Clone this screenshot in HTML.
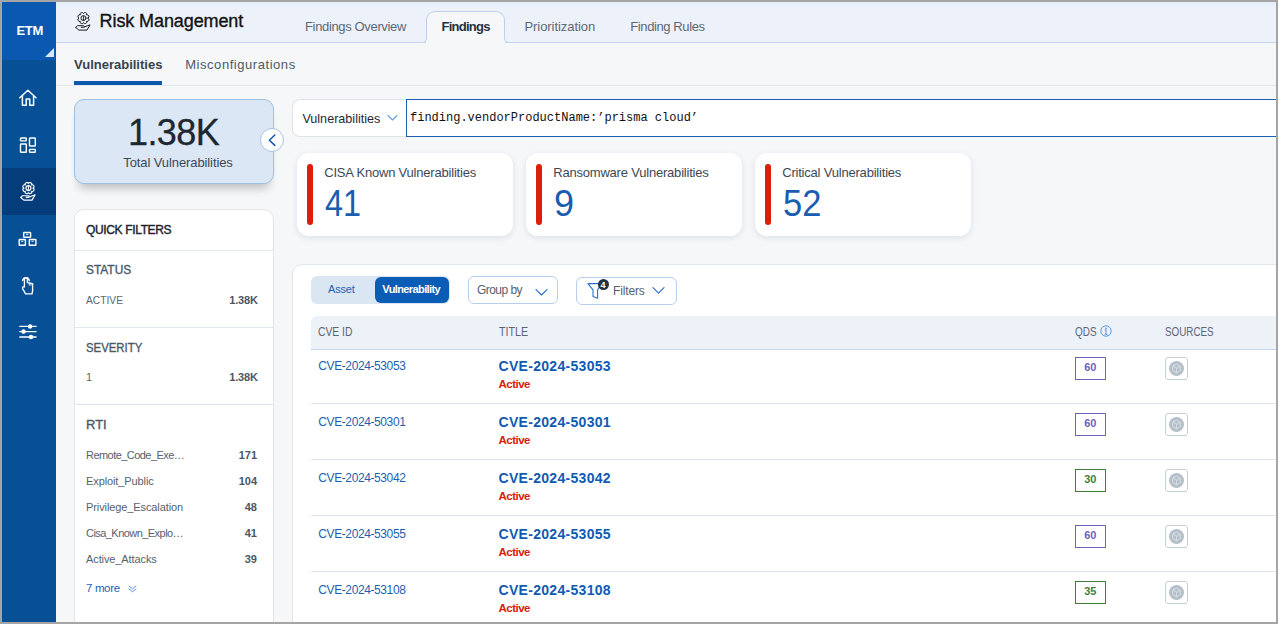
<!DOCTYPE html>
<html><head><meta charset="utf-8">
<style>
*{box-sizing:border-box;margin:0;padding:0}
html,body{width:1278px;height:624px;overflow:hidden;background:#f5f7f9}
body{font-family:"Liberation Sans",sans-serif;position:relative}
.b{position:absolute}
.t{position:absolute;line-height:1;white-space:nowrap}
</style></head><body>
<div class="b" style="left:0px;top:0px;width:1278px;height:624px;background:#a5a5a5"></div>
<div class="b" style="left:2px;top:2px;width:1274px;height:620px;background:#f5f7f9"></div>
<div class="b" style="left:2px;top:2px;width:54px;height:620px;background:#075096"></div>
<div class="b" style="left:2px;top:2px;width:54px;height:58px;background:#0a58b0"></div>
<div class="t " style="left:16.5px;top:24.00px;font-size:13px;color:#fff;font-weight:bold;letter-spacing:-0.3px;">ETM</div>
<div class="b" style="left:45px;top:48px;width:0;height:0;border-style:solid;border-width:0 0 9px 9px;border-color:transparent transparent #dde6f0 transparent"></div>
<div class="b" style="left:2px;top:168px;width:54px;height:47px;background:#053d7b"></div>
<svg class="b" style="left:18px;top:88px" width="20" height="20" viewBox="0 0 20 20" fill="none" stroke="#fff" stroke-width="1.5" stroke-linejoin="round" stroke-linecap="round"><path d="M1.8 9.7 L9.9 2.2 L18 9.7 M4.4 7.6 V17.2 H8.2 V11.1 H11.7 V17.2 H15.6 V7.6"/></svg>
<svg class="b" style="left:18px;top:135px" width="20" height="20" viewBox="0 0 20 20" fill="none" stroke="#fff" stroke-width="1.4"><rect x="2.5" y="3" width="5.8" height="2.9" rx="0.6"/><rect x="2.5" y="9" width="5.8" height="8.3" rx="0.6"/><rect x="11.5" y="3" width="5.8" height="8" rx="0.6"/><rect x="11.5" y="14.4" width="5.8" height="2.9" rx="0.6"/></svg>
<svg class="b" style="left:19.5px;top:182px" width="16" height="19" viewBox="0 0 16 19" fill="none" stroke="#fff" stroke-width="1.15" stroke-linejoin="round" stroke-linecap="round"><path d="M12.95 6.10 A1.72 1.72 0 0 1 11.63 9.28 A1.72 1.72 0 0 1 8.45 10.60 A1.72 1.72 0 0 1 5.27 9.28 A1.72 1.72 0 0 1 3.95 6.10 A1.72 1.72 0 0 1 5.27 2.92 A1.72 1.72 0 0 1 8.45 1.60 A1.72 1.72 0 0 1 11.63 2.92 A1.72 1.72 0 0 1 12.95 6.10Z"/><circle cx="8.45" cy="6.1" r="2.5"/><path d="M8.45 4.6 V6.4"/><circle cx="8.45" cy="7.7" r="0.3" fill="#fff"/><path d="M0.7 15.5 L3.9 18.1 H12 L15.1 12.8 L9.3 15 M0.7 15.5 L2.6 13.7 H8.5 C9.6 13.7 9.6 15.3 8.5 15.3 H6.2"/></svg>
<svg class="b" style="left:18px;top:228px" width="20" height="20" viewBox="0 0 20 20" fill="none" stroke="#fff" stroke-width="1.4"><rect x="5.7" y="4.5" width="6.9" height="4.7" rx="0.5"/><rect x="1.2" y="11.5" width="6.2" height="5.8" rx="0.5"/><rect x="11.3" y="11.5" width="6.6" height="5.8" rx="0.5"/><path d="M8 6.3h2.3M3.3 13.3h2M13.5 13.3h2" stroke-width="1"/></svg>
<svg class="b" style="left:18px;top:275px" width="20" height="20" viewBox="0 0 20 20" fill="none" stroke="#fff" stroke-width="1.35" stroke-linejoin="round" stroke-linecap="round"><path d="M6.4 11.5 V4.3 a1.5 1.5 0 0 1 3 0 V7.6 L14.6 8.6 V16 L14 18.9 H7.6 L4.6 13.6 C4.1 12.6 5 11.3 6.4 12"/><path d="M4.6 5.6 A3.4 3.4 0 0 1 11.3 5.6"/><path d="M11.3 8 V10.3 M13 8.3 V10.3" stroke-width="0.9"/></svg>
<svg class="b" style="left:18px;top:321px" width="20" height="20" viewBox="0 0 20 20" fill="#fff" stroke="#fff" stroke-width="1.3"><path d="M1.8 5.4h16.3M1.8 10.6h16.3M1.8 16h16.3" fill="none" stroke-linecap="round"/><circle cx="12.1" cy="5.4" r="1.6"/><circle cx="5.6" cy="10.6" r="1.6"/><circle cx="13" cy="16" r="1.6"/></svg>
<div class="b" style="left:56px;top:2px;width:1220px;height:41px;background:linear-gradient(#e4edf8,#edf2fa 6px,#edf2fa)"></div>
<div class="b" style="left:56px;top:42px;width:1220px;height:1px;background:#c3d5ec"></div>
<svg class="b" style="left:75px;top:12px" width="16" height="19" viewBox="0 0 16 19" fill="none" stroke="#1c1c1c" stroke-width="1.0" stroke-linejoin="round" stroke-linecap="round"><path d="M12.95 6.10 A1.72 1.72 0 0 1 11.63 9.28 A1.72 1.72 0 0 1 8.45 10.60 A1.72 1.72 0 0 1 5.27 9.28 A1.72 1.72 0 0 1 3.95 6.10 A1.72 1.72 0 0 1 5.27 2.92 A1.72 1.72 0 0 1 8.45 1.60 A1.72 1.72 0 0 1 11.63 2.92 A1.72 1.72 0 0 1 12.95 6.10Z"/><circle cx="8.45" cy="6.1" r="2.5"/><path d="M8.45 4.6 V6.4"/><circle cx="8.45" cy="7.7" r="0.3" fill="#1c1c1c"/><path d="M0.7 15.5 L3.9 18.1 H12 L15.1 12.8 L9.3 15 M0.7 15.5 L2.6 13.7 H8.5 C9.6 13.7 9.6 15.3 8.5 15.3 H6.2"/></svg>
<div class="t " style="left:99.6px;top:12.06px;font-size:18px;color:#131313;font-weight:normal;letter-spacing:-0.1px;-webkit-text-stroke:0.35px #131313;">Risk Management</div>
<div class="t " style="left:305px;top:20.00px;font-size:13px;color:#5d6875;font-weight:normal;letter-spacing:-0.35px;">Findings Overview</div>
<div class="b" style="left:426px;top:11px;width:79px;height:27px;background:#f5f7f9;border:1px solid #bcd0ea;border-bottom:none;border-radius:9px 9px 0 0"></div>
<div class="b" style="left:426px;top:38px;width:79px;height:5px;background:#f5f7f9"></div>
<div class="b" style="left:416px;top:36px;width:11px;height:7px;background:#edf2fa;border-right:1px solid #bcd0ea;border-bottom:1px solid #c3d5ec;border-bottom-right-radius:5px"></div>
<div class="b" style="left:504px;top:36px;width:11px;height:7px;background:#edf2fa;border-left:1px solid #bcd0ea;border-bottom:1px solid #c3d5ec;border-bottom-left-radius:5px"></div>
<div class="t " style="left:441.5px;top:20.00px;font-size:13px;color:#243242;font-weight:bold;letter-spacing:-0.75px;">Findings</div>
<div class="t " style="left:524.4px;top:20.00px;font-size:13px;color:#5d6875;font-weight:normal;letter-spacing:-0.05px;">Prioritization</div>
<div class="t " style="left:630.3px;top:20.00px;font-size:13px;color:#5d6875;font-weight:normal;letter-spacing:-0.4px;">Finding Rules</div>
<div class="t " style="left:74px;top:58.00px;font-size:13px;color:#37424e;font-weight:bold;letter-spacing:0px;">Vulnerabilities</div>
<div class="b" style="left:74px;top:81px;width:88px;height:4px;background:#0b57b0"></div>
<div class="t " style="left:185.2px;top:57.80px;font-size:13px;color:#4e5a67;font-weight:normal;letter-spacing:0.55px;">Misconfigurations</div>
<div class="b" style="left:56px;top:85px;width:1220px;height:1px;background:#e2e7ec"></div>
<div class="b" style="left:74px;top:99px;width:200px;height:85px;background:#dbe7f5;border:1px solid #9fbfe3;border-radius:10px;box-shadow:0 9px 10px -5px rgba(0,0,0,0.24)"></div>
<div class="t " style="left:128px;top:114.53px;font-size:36px;color:#1d2731;font-weight:normal;letter-spacing:-0.6px;-webkit-text-stroke:0.3px #1d2731;">1.38K</div>
<div class="t " style="left:123.3px;top:155.90px;font-size:13px;color:#3b4755;font-weight:normal;letter-spacing:-0.1px;">Total Vulnerabilities</div>
<div class="b" style="left:260px;top:128px;width:24px;height:24px;background:#fff;border:1px solid #a7c3e5;border-radius:50%"></div>
<svg class="b" style="left:266px;top:132px" width="12" height="16" viewBox="0 0 12 16" fill="none" stroke="#0b57b0" stroke-width="1.5" stroke-linecap="round" stroke-linejoin="round"><path d="M8.8 3 L3.4 8.2 L8.8 13.4"/></svg>
<div class="b" style="left:74px;top:209px;width:200px;height:440px;background:#fff;border:1px solid #e1e6eb;border-radius:10px"></div>
<div class="t " style="left:86px;top:224.24px;font-size:12px;color:#1b232c;font-weight:normal;letter-spacing:-0.35px;-webkit-text-stroke:0.4px #1b232c;">QUICK FILTERS</div>
<div class="b" style="left:75px;top:250px;width:198px;height:1px;background:#e3e8ec"></div>
<div class="t " style="left:86px;top:263.40px;font-size:13px;color:#4b5867;font-weight:normal;letter-spacing:0px;transform:scaleX(0.915);transform-origin:0 0;-webkit-text-stroke:0.35px #4b5867;">STATUS</div>
<div class="t " style="left:86px;top:295.29px;font-size:11px;color:#5b6672;font-weight:normal;letter-spacing:0px;transform:scaleX(0.93);transform-origin:0 0;">ACTIVE</div>
<div class="t" style="right:1020.3px;top:295.29px;font-size:11px;color:#4b5766;font-weight:bold;letter-spacing:-0.2px;">1.38K</div>
<div class="b" style="left:75px;top:327px;width:198px;height:1px;background:#e3e8ec"></div>
<div class="t " style="left:86px;top:341.00px;font-size:13px;color:#4b5867;font-weight:normal;letter-spacing:0px;transform:scaleX(0.875);transform-origin:0 0;-webkit-text-stroke:0.35px #4b5867;">SEVERITY</div>
<div class="t " style="left:86px;top:371.69px;font-size:11px;color:#5b6672;font-weight:normal;letter-spacing:0px;">1</div>
<div class="t" style="right:1020.3px;top:371.69px;font-size:11px;color:#4b5766;font-weight:bold;letter-spacing:-0.2px;">1.38K</div>
<div class="b" style="left:75px;top:404px;width:198px;height:1px;background:#e3e8ec"></div>
<div class="t " style="left:86px;top:418.40px;font-size:13px;color:#4b5867;font-weight:normal;letter-spacing:0px;-webkit-text-stroke:0.35px #4b5867;">RTI</div>
<div class="t " style="left:86px;top:449.79px;font-size:11px;color:#56616d;font-weight:normal;letter-spacing:-0.55px;">Remote_Code_Exe…</div>
<div class="t" style="right:1021px;top:449.79px;font-size:11px;color:#4b5766;font-weight:bold;letter-spacing:0px;">171</div>
<div class="t " style="left:86px;top:475.79px;font-size:11px;color:#56616d;font-weight:normal;letter-spacing:-0.1px;">Exploit_Public</div>
<div class="t" style="right:1021px;top:475.79px;font-size:11px;color:#4b5766;font-weight:bold;letter-spacing:0px;">104</div>
<div class="t " style="left:86px;top:501.79px;font-size:11px;color:#56616d;font-weight:normal;letter-spacing:-0.1px;">Privilege_Escalation</div>
<div class="t" style="right:1021px;top:501.79px;font-size:11px;color:#4b5766;font-weight:bold;letter-spacing:0px;">48</div>
<div class="t " style="left:86px;top:527.79px;font-size:11px;color:#56616d;font-weight:normal;letter-spacing:-0.55px;">Cisa_Known_Explo…</div>
<div class="t" style="right:1021px;top:527.79px;font-size:11px;color:#4b5766;font-weight:bold;letter-spacing:0px;">41</div>
<div class="t " style="left:86px;top:553.79px;font-size:11px;color:#56616d;font-weight:normal;letter-spacing:-0.1px;">Active_Attacks</div>
<div class="t" style="right:1021px;top:553.79px;font-size:11px;color:#4b5766;font-weight:bold;letter-spacing:0px;">39</div>
<div class="t " style="left:86px;top:583.07px;font-size:11.5px;color:#1a62b8;font-weight:normal;letter-spacing:-0.35px;">7 more</div>
<svg class="b" style="left:128px;top:585px" width="9" height="8" viewBox="0 0 9 8" fill="none" stroke="#5b8fd0" stroke-width="1" stroke-linecap="round" stroke-linejoin="round"><path d="M1 1 L4.5 3.8 L8 1 M1 4 L4.5 6.8 L8 4"/></svg>
<div class="b" style="left:292px;top:99px;width:115px;height:38px;background:#fff;border:1px solid #dfe4e9;border-right:none;border-radius:8px 0 0 8px"></div>
<div class="t " style="left:302.4px;top:112.63px;font-size:12.6px;color:#1e2935;font-weight:normal;letter-spacing:0px;">Vulnerabilities</div>
<svg class="b" style="left:387px;top:114px" width="11" height="8" viewBox="0 0 11 8" fill="none" stroke="#6b9fd6" stroke-width="1.1" stroke-linecap="round" stroke-linejoin="round"><path d="M1 1.5 L5.5 6 L10 1.5"/></svg>
<div class="b" style="left:406px;top:99px;width:874px;height:38px;background:#fff;border:1.5px solid #1b60b2"></div>
<div class="t " style="left:410px;top:111.80px;font-size:12px;color:#111;font-weight:normal;letter-spacing:0px;font-family:'Liberation Mono',monospace;">finding.vendorProductName:&#8217;prisma cloud&#8217;</div>
<div class="b" style="left:297px;top:153px;width:216px;height:83px;background:#fff;border-radius:12px;box-shadow:0 2px 6px rgba(20,40,70,0.10)"></div>
<div class="b" style="left:307px;top:164px;width:6px;height:61px;background:#dc1f0a;border-radius:3px"></div>
<div class="t " style="left:324.2px;top:165.90px;font-size:13px;color:#3d4855;font-weight:normal;letter-spacing:-0.2px;">CISA Known Vulnerabilities</div>
<div class="t " style="left:325px;top:185.53px;font-size:36px;color:#1a5cb0;font-weight:normal;letter-spacing:0px;transform:scaleX(0.9);transform-origin:0 0;">41</div>
<div class="b" style="left:526px;top:153px;width:216px;height:83px;background:#fff;border-radius:12px;box-shadow:0 2px 6px rgba(20,40,70,0.10)"></div>
<div class="b" style="left:536px;top:164px;width:6px;height:61px;background:#dc1f0a;border-radius:3px"></div>
<div class="t " style="left:553.2px;top:165.90px;font-size:13px;color:#3d4855;font-weight:normal;letter-spacing:-0.2px;">Ransomware Vulnerabilities</div>
<div class="t " style="left:554px;top:185.53px;font-size:36px;color:#1a5cb0;font-weight:normal;letter-spacing:0px;transform:scaleX(1.0);transform-origin:0 0;">9</div>
<div class="b" style="left:755px;top:153px;width:216px;height:83px;background:#fff;border-radius:12px;box-shadow:0 2px 6px rgba(20,40,70,0.10)"></div>
<div class="b" style="left:765px;top:164px;width:6px;height:61px;background:#dc1f0a;border-radius:3px"></div>
<div class="t " style="left:782.2px;top:165.90px;font-size:13px;color:#3d4855;font-weight:normal;letter-spacing:-0.2px;">Critical Vulnerabilities</div>
<div class="t " style="left:783px;top:185.53px;font-size:36px;color:#1a5cb0;font-weight:normal;letter-spacing:0px;transform:scaleX(0.96);transform-origin:0 0;">52</div>
<div class="b" style="left:292px;top:264px;width:1000px;height:400px;background:#fff;border:1px solid #e1e6eb;border-radius:10px"></div>
<div class="b" style="left:311px;top:276px;width:139px;height:28px;background:#dbe6f3;border-radius:6px"></div>
<div class="b" style="left:375px;top:277px;width:74px;height:26px;background:#0b5cb5;border-radius:6px"></div>
<div class="t " style="left:328px;top:284.49px;font-size:11px;color:#2461b5;font-weight:normal;letter-spacing:-0.2px;">Asset</div>
<div class="t " style="left:382.3px;top:284.19px;font-size:11px;color:#fff;font-weight:bold;letter-spacing:-0.6px;">Vulnerability</div>
<div class="b" style="left:468px;top:276px;width:90px;height:28px;background:#fff;border:1px solid #b7cfea;border-radius:6px"></div>
<div class="t " style="left:477px;top:284.24px;font-size:12px;color:#56616d;font-weight:normal;letter-spacing:-0.55px;">Group by</div>
<svg class="b" style="left:534px;top:287px" width="15" height="10" viewBox="0 0 15 10" fill="none" stroke="#2a6fd0" stroke-width="1.15" stroke-linecap="round" stroke-linejoin="round"><path d="M2 2.6 L7.5 8 L13 2.6"/></svg>
<div class="b" style="left:576px;top:277px;width:101px;height:28px;background:#fff;border:1px solid #b7cfea;border-radius:6px"></div>
<svg class="b" style="left:584px;top:280px" width="20" height="20" viewBox="0 0 20 20" fill="none" stroke="#2a6fd0" stroke-width="1.1" stroke-linejoin="round"><path d="M3.9 3.6 H17.5 L13.6 9.8 V18.2 L9 16.5 V9.8 Z"/></svg>
<div class="b" style="left:598px;top:279px;width:11px;height:11px;background:#26323e;border-radius:50%"></div>
<div class="t " style="left:600.6px;top:280.58px;font-size:9px;color:#fff;font-weight:bold;letter-spacing:0px;">4</div>
<div class="t " style="left:613px;top:284.84px;font-size:12px;color:#56616d;font-weight:normal;letter-spacing:-0.15px;">Filters</div>
<svg class="b" style="left:651px;top:285px" width="15" height="10" viewBox="0 0 15 10" fill="none" stroke="#2a6fd0" stroke-width="1.15" stroke-linecap="round" stroke-linejoin="round"><path d="M2 2.7 L7.5 8.2 L13 2.7"/></svg>
<div class="b" style="left:311px;top:316px;width:970px;height:34px;background:#edf2f9;border-bottom:1px solid #c4d7ee;border-radius:6px 0 0 0"></div>
<div class="t " style="left:318.3px;top:325.64px;font-size:12px;color:#5b6673;font-weight:normal;letter-spacing:0px;transform:scaleX(0.86);transform-origin:0 0;">CVE ID</div>
<div class="t " style="left:498.5px;top:325.64px;font-size:12px;color:#5b6673;font-weight:normal;letter-spacing:0px;transform:scaleX(0.89);transform-origin:0 0;">TITLE</div>
<div class="t " style="left:1075px;top:325.54px;font-size:12px;color:#5b6673;font-weight:normal;letter-spacing:0px;transform:scaleX(0.83);transform-origin:0 0;">QDS</div>
<svg class="b" style="left:1099.5px;top:325px" width="12" height="12" viewBox="0 0 12 12" fill="none" stroke="#5a9ad8" stroke-width="1"><circle cx="6" cy="6" r="5.2"/><path d="M6 5 V9.2 M5 9.2 H7.2 M5 5 H6" stroke-linecap="round"/><circle cx="6" cy="3.2" r="0.4" fill="#5a9ad8"/></svg>
<div class="t " style="left:1165px;top:325.54px;font-size:12px;color:#5b6673;font-weight:normal;letter-spacing:0px;transform:scaleX(0.82);transform-origin:0 0;">SOURCES</div>
<div class="t " style="left:318.3px;top:360.14px;font-size:12px;color:#1c5fb0;font-weight:normal;letter-spacing:-0.4px;">CVE-2024-53053</div>
<div class="t " style="left:498.5px;top:358.95px;font-size:14px;color:#0f5bb3;font-weight:bold;letter-spacing:0.3px;">CVE-2024-53053</div>
<div class="t " style="left:498.5px;top:378.97px;font-size:11.5px;color:#dc1a0a;font-weight:bold;letter-spacing:-0.5px;">Active</div>
<div class="b" style="left:1075px;top:357px;width:31px;height:23px;background:#fff;border:1.5px solid #6666bb"></div>
<div class="t " style="left:1084.2px;top:362.29px;font-size:11px;color:#6666bb;font-weight:bold;letter-spacing:0px;">60</div>
<div class="b" style="left:1165px;top:357px;width:23px;height:23px;background:#fff;border:1px solid #c7d0d7;border-radius:3px"></div>
<div class="b" style="left:1169px;top:361px;width:15px;height:15px;background:#b5c0c8;border-radius:50%"></div>
<svg class="b" style="left:1171px;top:363px" width="11" height="11" viewBox="0 0 11 11" fill="none" stroke="#dfe5ea" stroke-width="0.8" stroke-linejoin="round"><path d="M5.5 1.2 L9.3 3.2 V7.6 L5.5 9.8 L1.7 7.6 V3.2 Z M1.7 3.2 L5.5 5.3 L9.3 3.2 M5.5 5.3 V9.8"/></svg>
<div class="b" style="left:311px;top:403.4px;width:970px;height:1px;background:#e3e8ec"></div>
<div class="t " style="left:318.3px;top:416.14px;font-size:12px;color:#1c5fb0;font-weight:normal;letter-spacing:-0.4px;">CVE-2024-50301</div>
<div class="t " style="left:498.5px;top:414.95px;font-size:14px;color:#0f5bb3;font-weight:bold;letter-spacing:0.3px;">CVE-2024-50301</div>
<div class="t " style="left:498.5px;top:434.97px;font-size:11.5px;color:#dc1a0a;font-weight:bold;letter-spacing:-0.5px;">Active</div>
<div class="b" style="left:1075px;top:413px;width:31px;height:23px;background:#fff;border:1.5px solid #6666bb"></div>
<div class="t " style="left:1084.2px;top:418.29px;font-size:11px;color:#6666bb;font-weight:bold;letter-spacing:0px;">60</div>
<div class="b" style="left:1165px;top:413px;width:23px;height:23px;background:#fff;border:1px solid #c7d0d7;border-radius:3px"></div>
<div class="b" style="left:1169px;top:417px;width:15px;height:15px;background:#b5c0c8;border-radius:50%"></div>
<svg class="b" style="left:1171px;top:419px" width="11" height="11" viewBox="0 0 11 11" fill="none" stroke="#dfe5ea" stroke-width="0.8" stroke-linejoin="round"><path d="M5.5 1.2 L9.3 3.2 V7.6 L5.5 9.8 L1.7 7.6 V3.2 Z M1.7 3.2 L5.5 5.3 L9.3 3.2 M5.5 5.3 V9.8"/></svg>
<div class="b" style="left:311px;top:459.4px;width:970px;height:1px;background:#e3e8ec"></div>
<div class="t " style="left:318.3px;top:472.14px;font-size:12px;color:#1c5fb0;font-weight:normal;letter-spacing:-0.4px;">CVE-2024-53042</div>
<div class="t " style="left:498.5px;top:470.95px;font-size:14px;color:#0f5bb3;font-weight:bold;letter-spacing:0.3px;">CVE-2024-53042</div>
<div class="t " style="left:498.5px;top:490.97px;font-size:11.5px;color:#dc1a0a;font-weight:bold;letter-spacing:-0.5px;">Active</div>
<div class="b" style="left:1075px;top:469px;width:31px;height:23px;background:#fff;border:1.5px solid #3d7f3a"></div>
<div class="t " style="left:1084.2px;top:474.29px;font-size:11px;color:#3d7f3a;font-weight:bold;letter-spacing:0px;">30</div>
<div class="b" style="left:1165px;top:469px;width:23px;height:23px;background:#fff;border:1px solid #c7d0d7;border-radius:3px"></div>
<div class="b" style="left:1169px;top:473px;width:15px;height:15px;background:#b5c0c8;border-radius:50%"></div>
<svg class="b" style="left:1171px;top:475px" width="11" height="11" viewBox="0 0 11 11" fill="none" stroke="#dfe5ea" stroke-width="0.8" stroke-linejoin="round"><path d="M5.5 1.2 L9.3 3.2 V7.6 L5.5 9.8 L1.7 7.6 V3.2 Z M1.7 3.2 L5.5 5.3 L9.3 3.2 M5.5 5.3 V9.8"/></svg>
<div class="b" style="left:311px;top:515.4px;width:970px;height:1px;background:#e3e8ec"></div>
<div class="t " style="left:318.3px;top:528.14px;font-size:12px;color:#1c5fb0;font-weight:normal;letter-spacing:-0.4px;">CVE-2024-53055</div>
<div class="t " style="left:498.5px;top:526.95px;font-size:14px;color:#0f5bb3;font-weight:bold;letter-spacing:0.3px;">CVE-2024-53055</div>
<div class="t " style="left:498.5px;top:546.97px;font-size:11.5px;color:#dc1a0a;font-weight:bold;letter-spacing:-0.5px;">Active</div>
<div class="b" style="left:1075px;top:525px;width:31px;height:23px;background:#fff;border:1.5px solid #6666bb"></div>
<div class="t " style="left:1084.2px;top:530.29px;font-size:11px;color:#6666bb;font-weight:bold;letter-spacing:0px;">60</div>
<div class="b" style="left:1165px;top:525px;width:23px;height:23px;background:#fff;border:1px solid #c7d0d7;border-radius:3px"></div>
<div class="b" style="left:1169px;top:529px;width:15px;height:15px;background:#b5c0c8;border-radius:50%"></div>
<svg class="b" style="left:1171px;top:531px" width="11" height="11" viewBox="0 0 11 11" fill="none" stroke="#dfe5ea" stroke-width="0.8" stroke-linejoin="round"><path d="M5.5 1.2 L9.3 3.2 V7.6 L5.5 9.8 L1.7 7.6 V3.2 Z M1.7 3.2 L5.5 5.3 L9.3 3.2 M5.5 5.3 V9.8"/></svg>
<div class="b" style="left:311px;top:571.4px;width:970px;height:1px;background:#e3e8ec"></div>
<div class="t " style="left:318.3px;top:584.14px;font-size:12px;color:#1c5fb0;font-weight:normal;letter-spacing:-0.4px;">CVE-2024-53108</div>
<div class="t " style="left:498.5px;top:582.95px;font-size:14px;color:#0f5bb3;font-weight:bold;letter-spacing:0.3px;">CVE-2024-53108</div>
<div class="t " style="left:498.5px;top:602.97px;font-size:11.5px;color:#dc1a0a;font-weight:bold;letter-spacing:-0.5px;">Active</div>
<div class="b" style="left:1075px;top:581px;width:31px;height:23px;background:#fff;border:1.5px solid #3d7f3a"></div>
<div class="t " style="left:1084.2px;top:586.29px;font-size:11px;color:#3d7f3a;font-weight:bold;letter-spacing:0px;">35</div>
<div class="b" style="left:1165px;top:581px;width:23px;height:23px;background:#fff;border:1px solid #c7d0d7;border-radius:3px"></div>
<div class="b" style="left:1169px;top:585px;width:15px;height:15px;background:#b5c0c8;border-radius:50%"></div>
<svg class="b" style="left:1171px;top:587px" width="11" height="11" viewBox="0 0 11 11" fill="none" stroke="#dfe5ea" stroke-width="0.8" stroke-linejoin="round"><path d="M5.5 1.2 L9.3 3.2 V7.6 L5.5 9.8 L1.7 7.6 V3.2 Z M1.7 3.2 L5.5 5.3 L9.3 3.2 M5.5 5.3 V9.8"/></svg>
<div class="b" style="left:1276px;top:0px;width:2px;height:624px;background:#a5a5a5"></div>
<div class="b" style="left:0px;top:622px;width:1278px;height:2px;background:#a5a5a5"></div>
<div class="b" style="left:0px;top:0px;width:1278px;height:2px;background:#a5a5a5"></div>
<div class="b" style="left:0px;top:0px;width:2px;height:624px;background:#a5a5a5"></div>
</body></html>
